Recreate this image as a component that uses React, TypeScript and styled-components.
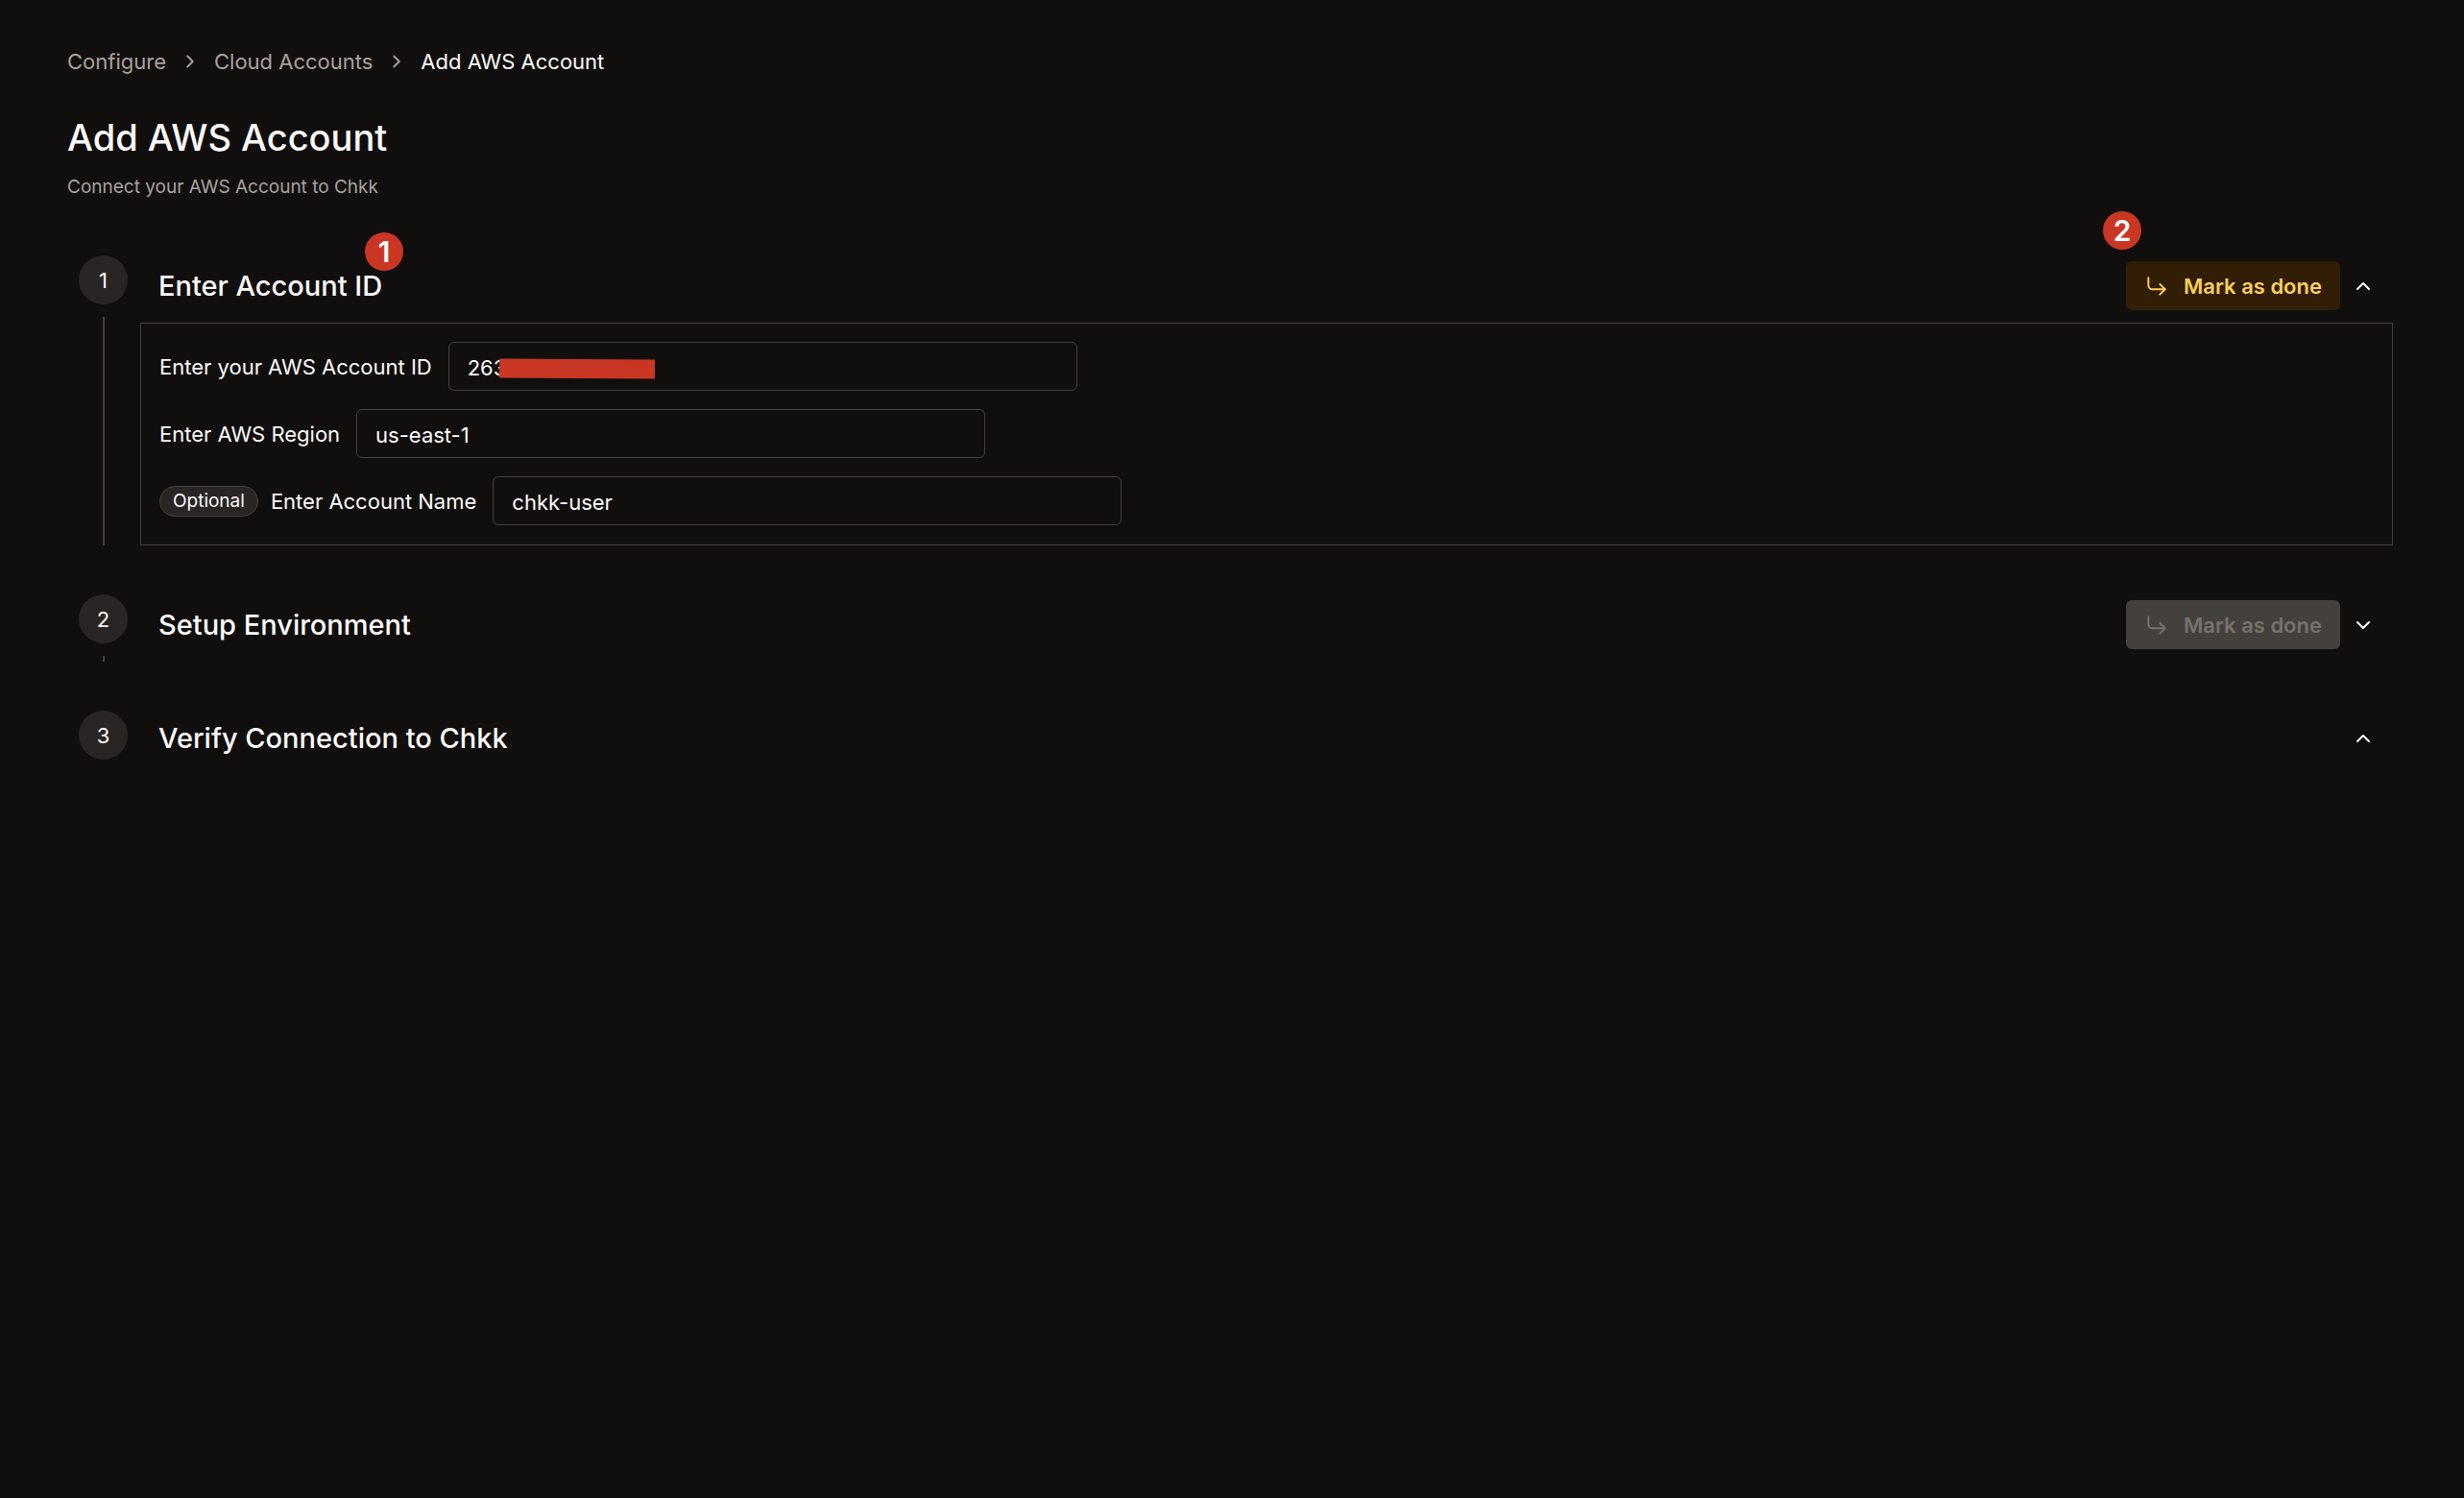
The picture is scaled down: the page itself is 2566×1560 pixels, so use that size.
import React, { useState } from "react";
import styled, { createGlobalStyle } from "styled-components";

const GlobalStyle = createGlobalStyle`
  *, *::before, *::after { box-sizing: border-box; }
  body {
    margin: 0;
    min-height: 100vh;
    background: #110f0e;
    color: #fafaf9;
    font-family: Inter, "Liberation Sans", sans-serif;
    font-size: 22px;
    line-height: 32px;
    -webkit-font-smoothing: antialiased;
  }
  button, input { font: inherit; color: inherit; }
`;

const Page = styled.main`
  padding: 48px 70px;
`;

const Crumbs = styled.ol`
  display: flex;
  align-items: center;
  gap: 14px;
  margin: 0;
  padding: 0;
  list-style: none;
  color: #a8a29e;
`;

const Crumb = styled.li`
  display: flex;
  align-items: center;
  gap: 14px;
`;

const CrumbLink = styled.a`
  color: inherit;
  text-decoration: none;
`;

const CrumbCurrent = styled.span`
  color: #fafaf9;
`;

const PageTitle = styled.h1`
  margin: 38px 0 0;
  font-size: 38px;
  line-height: 51px;
  font-weight: 500;
`;

const Subtitle = styled.p`
  margin: 13px 0 0;
  font-size: 19px;
  line-height: 26px;
  color: #a8a29e;
`;

const Steps = styled.ol`
  display: flex;
  flex-direction: column;
  gap: 51px;
  margin: 58px 4px 0 12px;
  padding: 0;
  list-style: none;
`;

const StepItem = styled.li`
  display: flex;
  gap: 13px;
`;

const Rail = styled.div`
  display: flex;
  flex-direction: column;
  align-items: center;
  gap: 13px;
`;

const StepNumber = styled.span`
  display: grid;
  place-items: center;
  width: 51px;
  height: 51px;
  border-radius: 50%;
  background: #292524;
`;

const RailLine = styled.span`
  flex: 1;
  width: 2px;
  background: #44403c;
`;

const StepContent = styled.section`
  flex: 1;
  min-width: 0;
`;

const StepHeader = styled.header`
  display: flex;
  align-items: center;
  justify-content: space-between;
  padding: 6px 19px 13px;
`;

const StepTitle = styled.h2`
  position: relative;
  margin: 0;
  font-size: 29px;
  line-height: 45px;
  font-weight: 500;
`;

const Actions = styled.div`
  display: flex;
  align-items: center;
  gap: 12px;
`;

const ButtonAnchor = styled.div`
  position: relative;
`;

const DoneButton = styled.button`
  display: flex;
  align-items: center;
  gap: 15px;
  height: 51px;
  padding: 0 19px;
  border: 0;
  border-radius: 6px;
  background: #321d06;
  color: #fcd05b;
  font-weight: 600;
  &:disabled {
    background: #44403c;
    color: #78716c;
  }
`;

const ToggleButton = styled.button`
  display: grid;
  place-items: center;
  padding: 0;
  border: 0;
  background: none;
`;

const Marker = styled.span<{ $left: number; $top: number }>`
  position: absolute;
  left: ${(p) => p.$left}px;
  top: ${(p) => p.$top}px;
  display: grid;
  place-items: center;
  width: 40px;
  height: 40px;
  border-radius: 50%;
  background: #c93624;
  color: #fff;
  font-size: 30px;
  line-height: 40px;
  font-weight: 600;
`;

const Panel = styled.div`
  display: flex;
  flex-direction: column;
  gap: 19px;
  padding: 19px 19px 20px;
  border: 1px solid #44403c;
`;

const Field = styled.div`
  display: flex;
  align-items: center;
  gap: 13px;
`;

const FieldLabel = styled.label`
  padding-right: 4px;
`;

const InputBox = styled.div`
  position: relative;
`;

const TextInput = styled.input`
  display: block;
  width: 655px;
  height: 51px;
  padding: 2px 19px 0;
  border: 1px solid #44403c;
  border-radius: 6px;
  background: transparent;
  outline: none;
`;

const Redaction = styled.span`
  position: absolute;
  left: 53px;
  top: 18px;
  width: 162px;
  height: 20px;
  background: #c93624;
  transform: rotate(0.4deg);
`;

const Tag = styled.span`
  padding: 2px 13px;
  border: 1px solid #44403c;
  border-radius: 16px;
  background: #292524;
  font-size: 19px;
  line-height: 26px;
`;

function Chevron({ d, size }: { d: string; size: number }) {
  return (
    <svg width={size} height={size} viewBox="0 0 24 24" fill="none" stroke="currentColor" strokeWidth="2" strokeLinecap="round" strokeLinejoin="round" aria-hidden="true">
      <path d={d} />
    </svg>
  );
}

function CornerArrow() {
  return (
    <svg width="26" height="26" viewBox="0 0 24 24" fill="none" stroke="currentColor" strokeWidth="1.8" strokeLinecap="round" strokeLinejoin="round" aria-hidden="true">
      <path d="m15 10 5 5-5 5" />
      <path d="M4 4v7a4 4 0 0 0 4 4h12" />
    </svg>
  );
}

type StepProps = {
  number: number;
  title: string;
  open: boolean;
  last?: boolean;
  titleMarker?: React.ReactNode;
  action?: React.ReactNode;
  children?: React.ReactNode;
};

function Step({ number, title, open, last, titleMarker, action, children }: StepProps) {
  return (
    <StepItem>
      <Rail>
        <StepNumber>{number}</StepNumber>
        {!last && <RailLine />}
      </Rail>
      <StepContent>
        <StepHeader>
          <StepTitle>
            {title}
            {titleMarker}
          </StepTitle>
          <Actions>
            {action}
            <ToggleButton type="button" aria-label={`Toggle ${title}`} aria-expanded={open}>
              <Chevron size={24} d={open ? "m18 15-6-6-6 6" : "m6 9 6 6 6-6"} />
            </ToggleButton>
          </Actions>
        </StepHeader>
        {children}
      </StepContent>
    </StepItem>
  );
}

export default function App() {
  const [accountId, setAccountId] = useState("263");
  const [region, setRegion] = useState("us-east-1");
  const [name, setName] = useState("chkk-user");

  return (
    <Page>
      <GlobalStyle />
      <nav aria-label="Breadcrumb">
        <Crumbs>
          <Crumb>
            <CrumbLink href="#configure">Configure</CrumbLink>
            <Chevron size={22} d="m9 18 6-6-6-6" />
          </Crumb>
          <Crumb>
            <CrumbLink href="#accounts">Cloud Accounts</CrumbLink>
            <Chevron size={22} d="m9 18 6-6-6-6" />
          </Crumb>
          <Crumb>
            <CrumbCurrent aria-current="page">Add AWS Account</CrumbCurrent>
          </Crumb>
        </Crumbs>
      </nav>
      <PageTitle>Add AWS Account</PageTitle>
      <Subtitle>Connect your AWS Account to Chkk</Subtitle>
      <Steps>
        <Step
          number={1}
          title="Enter Account ID"
          open
          titleMarker={<Marker $left={215} $top={-33}>1</Marker>}
          action={
            <ButtonAnchor>
              <DoneButton type="button">
                <CornerArrow />
                Mark as done
              </DoneButton>
              <Marker $left={-24} $top={-52}>2</Marker>
            </ButtonAnchor>
          }
        >
          <Panel>
            <Field>
              <FieldLabel htmlFor="account-id">Enter your AWS Account ID</FieldLabel>
              <InputBox>
                <TextInput id="account-id" value={accountId} onChange={(e) => setAccountId(e.target.value)} />
                <Redaction />
              </InputBox>
            </Field>
            <Field>
              <FieldLabel htmlFor="region">Enter AWS Region</FieldLabel>
              <TextInput id="region" value={region} onChange={(e) => setRegion(e.target.value)} />
            </Field>
            <Field>
              <Tag>Optional</Tag>
              <FieldLabel htmlFor="account-name">Enter Account Name</FieldLabel>
              <TextInput id="account-name" value={name} onChange={(e) => setName(e.target.value)} />
            </Field>
          </Panel>
        </Step>
        <Step
          number={2}
          title="Setup Environment"
          open={false}
          action={
            <DoneButton type="button" disabled>
              <CornerArrow />
              Mark as done
            </DoneButton>
          }
        />
        <Step number={3} title="Verify Connection to Chkk" open last />
      </Steps>
    </Page>
  );
}
